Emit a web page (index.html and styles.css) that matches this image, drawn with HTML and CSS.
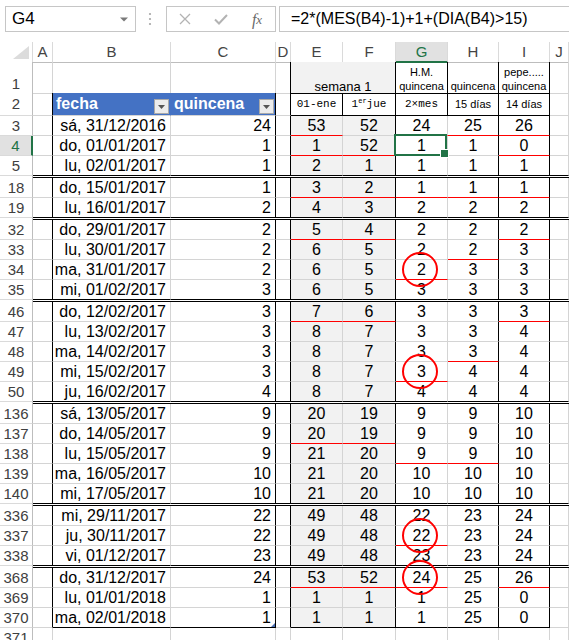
FILE: index.html
```html
<!DOCTYPE html>
<html lang="es">
<head>
<meta charset="utf-8">
<title>quincena</title>
<link rel="stylesheet" href="styles.css">
</head>
<body>
<div class="toolbar">
  <div class="namebox"><span>G4</span><svg width="8" height="5" viewBox="0 0 8 5"><path d="M0 0.5h8L4 4.5z" fill="#7a7a7a"/></svg></div>
  <div class="grip"><svg width="4" height="14" viewBox="0 0 4 14"><circle cx="2" cy="2" r="1.1" fill="#a6a6a6"/><circle cx="2" cy="7" r="1.1" fill="#a6a6a6"/><circle cx="2" cy="12" r="1.1" fill="#a6a6a6"/></svg></div>
  <div class="fxbox">
    <span class="ic"><svg width="12" height="12" viewBox="0 0 12 12"><path d="M1 1L11 11M11 1L1 11" stroke="#b3b3b3" stroke-width="1.3" fill="none"/></svg></span>
    <span class="ic"><svg width="14" height="11" viewBox="0 0 14 11"><path d="M1 5.5l4 4 8-8.5" stroke="#b3b3b3" stroke-width="2" fill="none"/></svg></span>
    <span class="ic fx">f<span class="fxx">x</span></span>
  </div>
  <div class="formula">=2*(MES(B4)-1)+1+(DIA(B4)&gt;15)</div>
</div>

<div class="sheet">
  <div class="row ch">
    <div class="hd corner"><svg width="16" height="13" viewBox="0 0 16 13"><path d="M16 0V13H0z" fill="#dcdcdc"/></svg></div>
    <div class="hd">A</div><div class="hd">B</div><div class="hd">C</div><div class="hd">D</div><div class="hd">E</div><div class="hd">F</div><div class="hd selcol">G</div><div class="hd">H</div><div class="hd">I</div><div class="hd">J</div>
  </div>

  <div class="row r1">
    <div class="c rh">1</div>
    <div class="c"></div>
    <div class="c bB"></div>
    <div class="c bB"></div>
    <div class="c bR"></div>
    <div class="c gf bR bB span2 stack"><span class="sem">semana 1</span></div>
    <div class="c bR bB stack sm"><span>H.M.</span><span>quincena</span></div>
    <div class="c bR bB stack sm"><span>quincena</span></div>
    <div class="c bR bB stack sm"><span>pepe.....</span><span>quincena</span></div>
    <div class="c"></div>
  </div>

  <div class="row r2">
    <div class="c rh">2</div>
    <div class="c bR"></div>
    <div class="c th thB"><span>fecha</span><span class="dd"><svg width="7" height="4" viewBox="0 0 7 4"><path d="M0 0h7L3.5 4z" fill="#555"/></svg></span></div>
    <div class="c th bR"><span>quincena</span><span class="dd"><svg width="7" height="4" viewBox="0 0 7 4"><path d="M0 0h7L3.5 4z" fill="#555"/></svg></span></div>
    <div class="c bR"></div>
    <div class="c ct bR bB mono">01-ene</div>
    <div class="c ct bR bB mono">1<sup>er</sup>jue</div>
    <div class="c ct bR bB mono">2×mes</div>
    <div class="c ct bR bB small">15 días</div>
    <div class="c ct bR bB small">14 días</div>
    <div class="c"></div>
  </div>

  <div class="row">
    <div class="c rh">3</div><div class="c bR"></div>
    <div class="c rt">sá, 31/12/2016</div><div class="c rt bR">24</div><div class="c bR"></div>
    <div class="c ct gf rB">53</div><div class="c ct gf bR">52</div><div class="c ct rB">24</div><div class="c ct bR rB">25</div><div class="c ct bR rB">26</div><div class="c"></div>
  </div>
  <div class="row">
    <div class="c rh selrow">4</div><div class="c bR"></div>
    <div class="c rt">do, 01/01/2017</div><div class="c rt bR">1</div><div class="c bR"></div>
    <div class="c ct gf rB">1</div><div class="c ct gf bR rB">52</div><div class="c ct ov">1<span class="selbox"></span></div><div class="c ct bR">1</div><div class="c ct bR rB">0</div><div class="c"></div>
  </div>
  <div class="row dbl">
    <div class="c rh">5</div><div class="c bR"></div>
    <div class="c rt">lu, 02/01/2017</div><div class="c rt bR">1</div><div class="c bR"></div>
    <div class="c ct gf">2</div><div class="c ct gf bR">1</div><div class="c ct">1</div><div class="c ct bR">1</div><div class="c ct bR">1</div><div class="c"></div>
  </div>
  <div class="sep"><div class="sh"></div><div class="sl"></div></div>

  <div class="row">
    <div class="c rh">18</div><div class="c bR"></div>
    <div class="c rt">do, 15/01/2017</div><div class="c rt bR">1</div><div class="c bR"></div>
    <div class="c ct gf rB">3</div><div class="c ct gf bR rB">2</div><div class="c ct rB">1</div><div class="c ct bR rB">1</div><div class="c ct bR rB">1</div><div class="c"></div>
  </div>
  <div class="row dbl">
    <div class="c rh">19</div><div class="c bR"></div>
    <div class="c rt">lu, 16/01/2017</div><div class="c rt bR">2</div><div class="c bR"></div>
    <div class="c ct gf">4</div><div class="c ct gf bR">3</div><div class="c ct">2</div><div class="c ct bR">2</div><div class="c ct bR">2</div><div class="c"></div>
  </div>
  <div class="sep"><div class="sh"></div><div class="sl"></div></div>

  <div class="row">
    <div class="c rh">32</div><div class="c bR"></div>
    <div class="c rt">do, 29/01/2017</div><div class="c rt bR">2</div><div class="c bR"></div>
    <div class="c ct gf rB">5</div><div class="c ct gf bR rB">4</div><div class="c ct">2</div><div class="c ct bR">2</div><div class="c ct bR rB">2</div><div class="c"></div>
  </div>
  <div class="row">
    <div class="c rh">33</div><div class="c bR"></div>
    <div class="c rt">lu, 30/01/2017</div><div class="c rt bR">2</div><div class="c bR"></div>
    <div class="c ct gf">6</div><div class="c ct gf bR">5</div><div class="c ct">2</div><div class="c ct bR rB">2</div><div class="c ct bR">3</div><div class="c"></div>
  </div>
  <div class="row">
    <div class="c rh">34</div><div class="c bR"></div>
    <div class="c rt">ma, 31/01/2017</div><div class="c rt bR">2</div><div class="c bR"></div>
    <div class="c ct gf">6</div><div class="c ct gf bR">5</div><div class="c ct rB ov">2<span class="ring"></span></div><div class="c ct bR">3</div><div class="c ct bR">3</div><div class="c"></div>
  </div>
  <div class="row dbl">
    <div class="c rh">35</div><div class="c bR"></div>
    <div class="c rt">mi, 01/02/2017</div><div class="c rt bR">3</div><div class="c bR"></div>
    <div class="c ct gf">6</div><div class="c ct gf bR">5</div><div class="c ct">3</div><div class="c ct bR">3</div><div class="c ct bR">3</div><div class="c"></div>
  </div>
  <div class="sep"><div class="sh"></div><div class="sl"></div></div>

  <div class="row">
    <div class="c rh">46</div><div class="c bR"></div>
    <div class="c rt">do, 12/02/2017</div><div class="c rt bR">3</div><div class="c bR"></div>
    <div class="c ct gf rB">7</div><div class="c ct gf bR rB">6</div><div class="c ct">3</div><div class="c ct bR">3</div><div class="c ct bR rB">3</div><div class="c"></div>
  </div>
  <div class="row">
    <div class="c rh">47</div><div class="c bR"></div>
    <div class="c rt">lu, 13/02/2017</div><div class="c rt bR">3</div><div class="c bR"></div>
    <div class="c ct gf">8</div><div class="c ct gf bR">7</div><div class="c ct">3</div><div class="c ct bR">3</div><div class="c ct bR">4</div><div class="c"></div>
  </div>
  <div class="row">
    <div class="c rh">48</div><div class="c bR"></div>
    <div class="c rt">ma, 14/02/2017</div><div class="c rt bR">3</div><div class="c bR"></div>
    <div class="c ct gf">8</div><div class="c ct gf bR">7</div><div class="c ct">3</div><div class="c ct bR rB">3</div><div class="c ct bR">4</div><div class="c"></div>
  </div>
  <div class="row">
    <div class="c rh">49</div><div class="c bR"></div>
    <div class="c rt">mi, 15/02/2017</div><div class="c rt bR">3</div><div class="c bR"></div>
    <div class="c ct gf">8</div><div class="c ct gf bR">7</div><div class="c ct rB ov">3<span class="ring"></span></div><div class="c ct bR">4</div><div class="c ct bR">4</div><div class="c"></div>
  </div>
  <div class="row dbl">
    <div class="c rh">50</div><div class="c bR"></div>
    <div class="c rt">ju, 16/02/2017</div><div class="c rt bR">4</div><div class="c bR"></div>
    <div class="c ct gf">8</div><div class="c ct gf bR">7</div><div class="c ct">4</div><div class="c ct bR">4</div><div class="c ct bR">4</div><div class="c"></div>
  </div>
  <div class="sep"><div class="sh"></div><div class="sl"></div></div>

  <div class="row">
    <div class="c rh">136</div><div class="c bR"></div>
    <div class="c rt">sá, 13/05/2017</div><div class="c rt bR">9</div><div class="c bR"></div>
    <div class="c ct gf">20</div><div class="c ct gf bR">19</div><div class="c ct">9</div><div class="c ct bR">9</div><div class="c ct bR">10</div><div class="c"></div>
  </div>
  <div class="row">
    <div class="c rh">137</div><div class="c bR"></div>
    <div class="c rt">do, 14/05/2017</div><div class="c rt bR">9</div><div class="c bR"></div>
    <div class="c ct gf rB">20</div><div class="c ct gf bR rB">19</div><div class="c ct">9</div><div class="c ct bR">9</div><div class="c ct bR">10</div><div class="c"></div>
  </div>
  <div class="row">
    <div class="c rh">138</div><div class="c bR"></div>
    <div class="c rt">lu, 15/05/2017</div><div class="c rt bR">9</div><div class="c bR"></div>
    <div class="c ct gf">21</div><div class="c ct gf bR">20</div><div class="c ct rB">9</div><div class="c ct bR rB">9</div><div class="c ct bR">10</div><div class="c"></div>
  </div>
  <div class="row">
    <div class="c rh">139</div><div class="c bR"></div>
    <div class="c rt">ma, 16/05/2017</div><div class="c rt bR">10</div><div class="c bR"></div>
    <div class="c ct gf">21</div><div class="c ct gf bR">20</div><div class="c ct">10</div><div class="c ct bR">10</div><div class="c ct bR">10</div><div class="c"></div>
  </div>
  <div class="row dbl">
    <div class="c rh">140</div><div class="c bR"></div>
    <div class="c rt">mi, 17/05/2017</div><div class="c rt bR">10</div><div class="c bR"></div>
    <div class="c ct gf">21</div><div class="c ct gf bR">20</div><div class="c ct">10</div><div class="c ct bR">10</div><div class="c ct bR">10</div><div class="c"></div>
  </div>
  <div class="sep"><div class="sh"></div><div class="sl"></div></div>

  <div class="row">
    <div class="c rh">336</div><div class="c bR"></div>
    <div class="c rt">mi, 29/11/2017</div><div class="c rt bR">22</div><div class="c bR"></div>
    <div class="c ct gf">49</div><div class="c ct gf bR">48</div><div class="c ct">22</div><div class="c ct bR">23</div><div class="c ct bR">24</div><div class="c"></div>
  </div>
  <div class="row">
    <div class="c rh">337</div><div class="c bR"></div>
    <div class="c rt">ju, 30/11/2017</div><div class="c rt bR">22</div><div class="c bR"></div>
    <div class="c ct gf">49</div><div class="c ct gf bR">48</div><div class="c ct rB ov">22<span class="ring"></span></div><div class="c ct bR">23</div><div class="c ct bR">24</div><div class="c"></div>
  </div>
  <div class="row dbl">
    <div class="c rh">338</div><div class="c bR"></div>
    <div class="c rt">vi, 01/12/2017</div><div class="c rt bR">23</div><div class="c bR"></div>
    <div class="c ct gf">49</div><div class="c ct gf bR">48</div><div class="c ct">23</div><div class="c ct bR">23</div><div class="c ct bR">24</div><div class="c"></div>
  </div>
  <div class="sep"><div class="sh"></div><div class="sl"></div></div>

  <div class="row">
    <div class="c rh">368</div><div class="c bR"></div>
    <div class="c rt">do, 31/12/2017</div><div class="c rt bR">24</div><div class="c bR"></div>
    <div class="c ct gf rB">53</div><div class="c ct gf bR rB">52</div><div class="c ct rB ov">24<span class="ring"></span></div><div class="c ct bR">25</div><div class="c ct bR rB">26</div><div class="c"></div>
  </div>
  <div class="row">
    <div class="c rh">369</div><div class="c bR"></div>
    <div class="c rt">lu, 01/01/2018</div><div class="c rt bR">1</div><div class="c bR"></div>
    <div class="c ct gf">1</div><div class="c ct gf bR">1</div><div class="c ct">1</div><div class="c ct bR">25</div><div class="c ct bR">0</div><div class="c"></div>
  </div>
  <div class="row">
    <div class="c rh">370</div><div class="c bR"></div>
    <div class="c rt bB">ma, 02/01/2018</div><div class="c rt bR bB ov">1<span class="rsz"></span></div><div class="c bR"></div>
    <div class="c ct gf bB">1</div><div class="c ct gf bR bB">1</div><div class="c ct bB">1</div><div class="c ct bR bB">25</div><div class="c ct bR bB">0</div><div class="c"></div>
  </div>
  <div class="row">
    <div class="c rh">371</div><div class="c"></div>
    <div class="c"></div><div class="c"></div><div class="c"></div>
    <div class="c"></div><div class="c"></div><div class="c"></div><div class="c"></div><div class="c"></div><div class="c"></div>
  </div>
</div>
</body>
</html>
```

FILE: styles.css
```css
* { box-sizing: border-box; }
html, body { margin: 0; padding: 0; background: #fff; }
body {
  width: 569px;
  height: 640px;
  overflow: hidden;
  font-family: "Liberation Sans", Arial, sans-serif;
  color: #000;
}

/* ---------- formula bar ---------- */
.toolbar {
  height: 42px;
  display: flex;
  align-items: flex-start;
  padding: 6px 0 0 5px;
  width: 569px;
}
.namebox {
  width: 131px;
  height: 26px;
  border: 1px solid #c6c6c6;
  display: flex;
  align-items: center;
  justify-content: space-between;
  padding: 0 7px 0 6px;
  font-size: 17px;
  color: #000;
}
.grip {
  width: 30px;
  height: 26px;
  display: flex;
  align-items: center;
  justify-content: center;
  padding-right: 2px;
}
.fxbox {
  width: 110px;
  height: 26px;
  border: 1px solid #c6c6c6;
  display: grid;
  grid-template-columns: 36px 36px 36px;
  align-items: center;
}
.ic {
  display: flex;
  justify-content: center;
  align-items: center;
}
.fx {
  font-family: "Liberation Serif", "Times New Roman", serif;
  font-style: italic;
  font-size: 16px;
  color: #6a6a6a;
  padding-top: 1px;
}
.fxx { font-size: 13px; }
.formula {
  margin-left: 3px;
  flex: 1;
  height: 26px;
  border: 1px solid #c6c6c6;
  border-right: none;
  font-size: 16px;
  line-height: 24px;
  padding-left: 11px;
  white-space: nowrap;
  overflow: hidden;
}

/* ---------- sheet grid ---------- */
.sheet { width: 569px; }
.row {
  display: grid;
  grid-template-columns: 33px 20px 118px 105px 15px 52px 53px 52px 51px 51px 19px;
  height: 20px;
}
.row.ch { height: 20px; }
.row.r1 { height: 31px; }
.row.r2 { height: 23px; }

.hd {
  border-right: 1px solid #dadada;
  border-bottom: 1px solid #bdbdbd;
  text-align: center;
  font-size: 15px;
  line-height: 19px;
  color: #444;
}
.corner {
  display: flex;
  justify-content: flex-end;
  align-items: flex-end;
  padding: 0 3px 3px 0;
}
.selcol {
  background: #e1e1e1;
  color: #217346;
  border-bottom: 2px solid #217346;
}

.c {
  border-right: 1px solid #d4d4d4;
  border-bottom: 1px solid #d4d4d4;
  font-size: 16px;
  line-height: 19px;
  white-space: nowrap;
}
.rh {
  border-right-color: #bdbdbd;
  border-bottom-color: #dadada;
  text-align: center;
  font-size: 15px;
  color: #404040;
  background: #fff;
}
.r1 .rh { padding-top: 12px; }
.r2 .rh { line-height: 22px; }
.selrow {
  background: #e1e1e1;
  color: #217346;
  border-right: 2px solid #217346;
}

.ct { text-align: center; }
.rt { text-align: right; padding-right: 4px; }
.gf { background: #f2f2f2; }
.bR { border-right-color: #000; }
.bB { border-bottom-color: #000; }
.rB { border-bottom-color: #f00; }
.dbl > .c:not(.rh) { border-bottom-color: #000; }

.span2 { grid-column: span 2; }
.stack {
  display: flex;
  flex-direction: column;
  justify-content: flex-end;
  align-items: center;
}
.sm span { font-size: 11px; line-height: 14px; }
.sem { font-size: 13px; line-height: 15px; margin-bottom: -1px; }

.r2 .c { line-height: 22px; }
.mono {
  font-family: "Liberation Mono", "Courier New", monospace;
  font-size: 11px;
}
.mono sup { font-size: 7px; line-height: 0; vertical-align: 4px; }
.small { font-size: 11px; }

.th {
  background: #4472c4;
  color: #fff;
  font-weight: bold;
  display: flex;
  align-items: center;
  justify-content: space-between;
  padding: 0 1px 0 3px;
}
.thB { border-right-color: #4472c4; }
.dd {
  align-self: flex-end;
  margin-bottom: 1px;
  width: 15px;
  height: 15px;
  background: #ececec;
  border: 1px solid #a9a9a9;
  display: flex;
  align-items: center;
  justify-content: center;
}

.sep {
  display: grid;
  grid-template-columns: 33px 1fr;
  height: 2px;
}
.sh { border-right: 1px solid #bdbdbd; }
.sl { border-bottom: 1px solid #000; }

/* ---------- overlays ---------- */
.ov { position: relative; }
.selbox {
  position: absolute;
  left: -2px;
  top: -2px;
  right: 0;
  bottom: -1px;
  border: 2px solid #217346;
  z-index: 4;
}
.selbox::after {
  content: "";
  position: absolute;
  right: -4px;
  bottom: -4px;
  width: 7px;
  height: 7px;
  background: #217346;
  border: 1px solid #fff;
}
.ring {
  position: absolute;
  width: 36px;
  height: 35px;
  left: calc(50% - 20px);
  top: -8px;
  border: 2px solid #f00;
  border-radius: 50%;
  z-index: 5;
}
.rsz {
  position: absolute;
  right: 0;
  bottom: 0;
  width: 0;
  height: 0;
  border-left: 4px solid transparent;
  border-bottom: 4px solid #4a6eb0;
}
```
